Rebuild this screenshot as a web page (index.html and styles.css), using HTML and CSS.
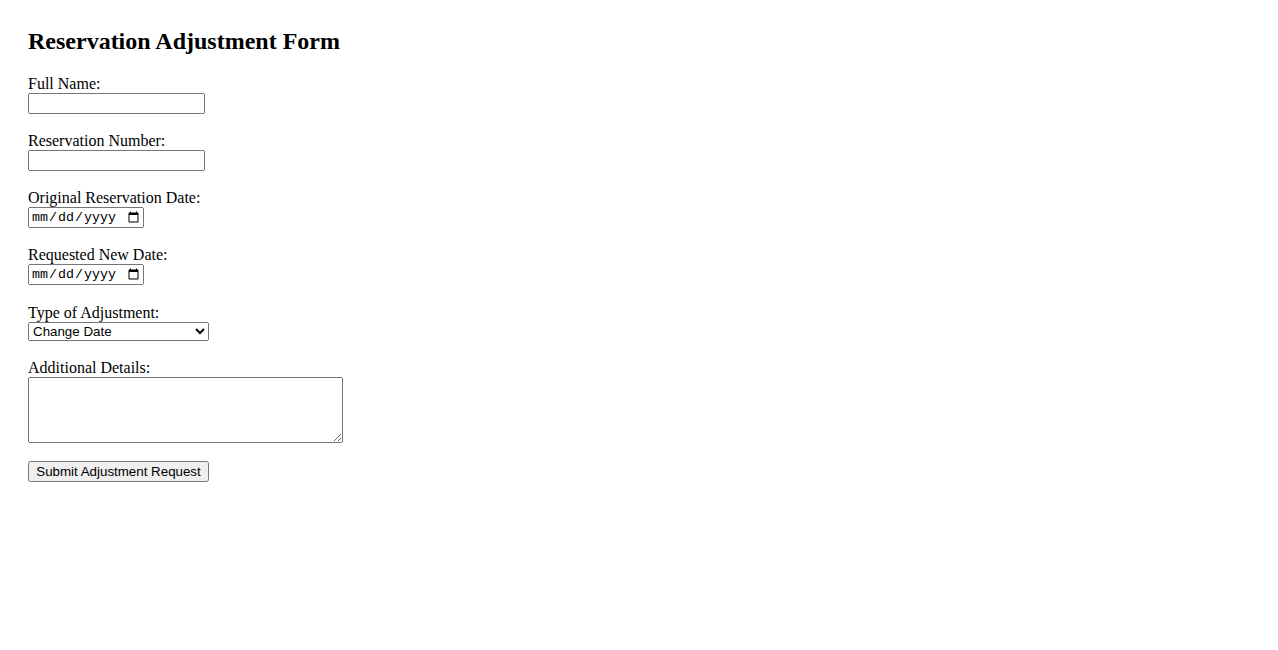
FILE: index.html
```html
<!DOCTYPE html>
<html lang="en">
<head>
  <meta charset="UTF-8">
  <meta name="viewport" content="width=device-width, initial-scale=1.0">
  <title>Reservation Adjustment Form</title>
  <link rel="stylesheet" href="styles.css">
</head>
<body>
  <div class="page">
    <h2>Reservation Adjustment Form</h2>
    <form id="adjustment-form">
      <div class="field">
        <label for="full-name">Full Name:</label>
        <input type="text" id="full-name" name="fullName" class="text-input">
      </div>
      <div class="field">
        <label for="res-number">Reservation Number:</label>
        <input type="text" id="res-number" name="reservationNumber" class="text-input">
      </div>
      <div class="field">
        <label for="orig-date">Original Reservation Date:</label>
        <input type="date" id="orig-date" name="originalDate" class="date-input">
      </div>
      <div class="field field-wide">
        <label for="new-date">Requested New Date:</label>
        <input type="date" id="new-date" name="newDate" class="date-input">
      </div>
      <div class="field">
        <label for="adj-type">Type of Adjustment:</label>
        <select id="adj-type" name="adjustmentType" class="select-input">
          <option value="date">Change Date</option>
          <option value="guests">Change Number of Guests</option>
          <option value="cancel">Cancel Reservation</option>
        </select>
      </div>
      <div class="field">
        <label for="details">Additional Details:</label>
        <textarea id="details" name="details" rows="4" class="details-input"></textarea>
      </div>
      <button type="submit" class="submit-btn">Submit Adjustment Request</button>
    </form>
  </div>
</body>
</html>
```

FILE: styles.css
```css
/* Page */
body {
  margin: 0;
  font-family: "Liberation Serif", "Times New Roman", serif;
  font-size: 16px;
  color: #000;
  background: #fff;
}

.page {
  padding: 28px;
}

h2 {
  margin: 0 0 20px;
  font-size: 24px;
  line-height: 27px;
  font-weight: bold;
}

/* Form fields */
.field {
  display: flex;
  flex-direction: column;
  align-items: flex-start;
  margin-bottom: 18px;
}

.field-wide {
  margin-bottom: 19px;
}

.field label {
  line-height: 18px;
}

.text-input,
.date-input,
.select-input,
.submit-btn {
  box-sizing: border-box;
  font-size: 13.333px;
}

.text-input {
  width: 177px;
  height: 21px;
  font-family: "Liberation Sans", Arial, sans-serif;
}

.date-input {
  width: 116px;
  height: 21px;
  font-family: "Liberation Mono", "Courier New", monospace;
}

.select-input {
  width: 181px;
  height: 19px;
  font-family: "Liberation Sans", Arial, sans-serif;
}

.details-input {
  box-sizing: border-box;
  width: 315px;
  height: 66px;
  font-family: "Liberation Mono", "Courier New", monospace;
  font-size: 13.333px;
}

.submit-btn {
  width: 181px;
  height: 21px;
  font-family: "Liberation Sans", Arial, sans-serif;
  padding: 1px 6px;
}
```
